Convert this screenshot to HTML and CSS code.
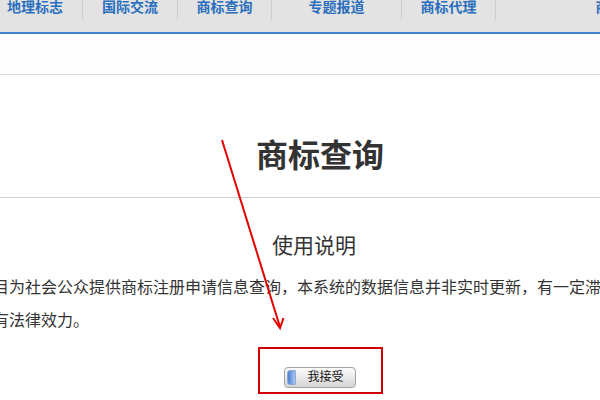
FILE: index.html
```html
<!DOCTYPE html>
<html lang="zh-CN">
<head>
<meta charset="utf-8">
<title>商标查询</title>
<link rel="stylesheet" href="styles.css">
</head>
<body>
<div class="viewport">
  <nav class="nav">
    <ul class="nav-list">
      <li class="nav-item"><a href="#">地理标志</a></li>
      <li class="nav-item"><a href="#">国际交流</a></li>
      <li class="nav-item"><a href="#">商标查询</a></li>
      <li class="nav-item wide"><a href="#">专题报道</a></li>
      <li class="nav-item"><a href="#">商标代理</a></li>
      <li class="nav-item last"><a href="#">商标评审</a></li>
    </ul>
  </nav>
  <div class="subbar"></div>
  <main class="page">
    <header class="title-block">
      <h1 class="title">商标查询</h1>
    </header>
    <section class="usage">
      <h2 class="usage-title">使用说明</h2>
      <p class="usage-text">本栏目为社会公众提供商标注册申请信息查询，本系统的数据信息并非实时更新，有一定滞后性，查询结果仅供参考，不具有法律效力。</p>
      <div class="accept-row">
        <div class="highlight">
          <button class="accept" type="button"><span class="knob"></span><span class="accept-label">我接受</span></button>
        </div>
      </div>
    </section>
  </main>
  <svg class="annotation" width="600" height="400" viewBox="0 0 600 400" aria-hidden="true">
    <line x1="222" y1="140" x2="280" y2="327" stroke="#e20000" stroke-width="2"/>
    <path d="M273,318 L280,328 L283.5,318" fill="none" stroke="#e20000" stroke-width="2" stroke-linejoin="miter"/>
  </svg>
</div>
</body>
</html>
```

FILE: styles.css
```css
* { box-sizing: border-box; }
html, body { margin: 0; padding: 0; background: #ffffff; }
body {
  font-family: "Liberation Sans", "Noto Sans CJK SC", sans-serif;
  color: #333333;
}
.viewport {
  position: relative;
  width: 600px;
  height: 400px;
  overflow: hidden;
}
.nav {
  height: 34px;
  background: #e3e3e3;
  border-bottom: 2px solid #3c86c8;
}
.nav-list {
  list-style: none;
  margin: 0 0 0 -12px;
  padding: 0;
  display: flex;
  align-items: flex-start;
  white-space: nowrap;
}
.nav-item {
  flex: 0 0 95px;
  height: 20px;
  border-right: 1px solid #cdcdcd;
  text-align: center;
}
.nav-item.wide { flex-basis: 130px; }
.nav-item:nth-child(3) { flex-basis: 94px; }
.nav-item:nth-child(5) { flex-basis: 94px; }
.nav-item.last { flex-basis: 256px; }
.nav-item a {
  display: block;
  margin-top: -1px;
  font-size: 14px;
  line-height: 16px;
  font-weight: bold;
  color: #2a6fbe;
  text-decoration: none;
}
.subbar {
  height: 41px;
  background: #fdfdfd;
  border-bottom: 1px solid #dcdcdc;
}
.page {
  width: 1000px;
  margin-left: -180px;
}
.title-block {
  padding: 61px 0 21px;
  border-bottom: 1px solid #cfcfcf;
  text-align: center;
}
.title {
  margin: 0;
  font-size: 32px;
  line-height: 40px;
  font-weight: bold;
  color: #333333;
}
.usage { text-align: center; }
.usage-title {
  margin: 33px 12px 0 0;
  font-size: 21px;
  line-height: 30px;
  font-weight: normal;
  color: #333333;
}
.usage-text {
  margin: 10px 0 0 141px;
  width: 840px;
  text-align: left;
  font-size: 16px;
  line-height: 33px;
  color: #333333;
}
.accept-row {
  margin-top: 10px;
  display: flex;
  justify-content: center;
}
.highlight {
  margin-left: 1px;
  width: 125px;
  height: 47px;
  border: 2px solid #d20000;
  padding: 18px 0 0 24px;
}
.accept {
  display: flex;
  align-items: center;
  width: 72px;
  height: 21px;
  padding: 0;
  border: 1px solid #a3a3a3;
  border-radius: 4px;
  background: linear-gradient(#fbfbfb, #e6e6e6 60%, #d4d4d4);
  font-family: "Liberation Sans", "Noto Sans CJK SC", sans-serif;
  cursor: pointer;
}
.knob {
  width: 9px;
  height: 15px;
  margin-left: 2px;
  border-radius: 3px 1px 1px 3px;
  background: linear-gradient(90deg, #4c80d2, #a9c6ee);
  border: 1px solid #8aa9d6;
}
.accept-label {
  flex: 1;
  text-align: center;
  font-size: 12px;
  line-height: 19px;
  color: #111111;
}
.annotation {
  position: absolute;
  left: 0;
  top: 0;
  pointer-events: none;
}
```
